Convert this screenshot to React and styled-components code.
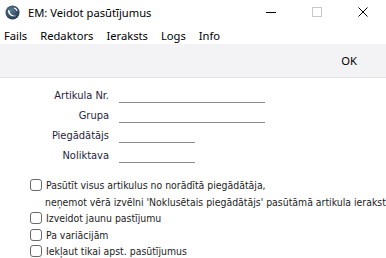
import React from 'react';
import styled, { createGlobalStyle } from 'styled-components';

const GlobalStyle = createGlobalStyle`
  html, body {
    margin: 0;
    padding: 0;
    background: #ffffff;
  }
  body {
    width: 386px;
    height: 258px;
    overflow: hidden;
  }
`;

const Window = styled.div`
  width: 386px;
  height: 258px;
  overflow: hidden;
  background: #ffffff;
`;

const TitleBar = styled.div`
  height: 24px;
  display: flex;
  align-items: center;
  padding-left: 5px;
  font-family: 'Noto Sans', 'Open Sans', sans-serif;
  font-size: 11.2px;
  color: #000;
`;

const Title = styled.span`
  margin-left: 8px;
  flex: 1;
`;

const WinButton = styled.div`
  width: 46px;
  height: 24px;
  display: flex;
  align-items: center;
  justify-content: center;
`;

const MenuBar = styled.div`
  height: 20px;
  box-sizing: border-box;
  padding: 3px 0 0 4px;
  display: flex;
  align-items: center;
  gap: 13px;
  font-family: 'Noto Sans', 'Open Sans', sans-serif;
  font-size: 11.2px;
  color: #000;
`;

const Toolbar = styled.div`
  height: 33px;
  background: #f3f3f5;
  border-bottom: 1px solid #e4e4e8;
  display: flex;
  align-items: center;
  justify-content: flex-end;
  padding-right: 29px;
  font-family: 'Noto Sans', 'Open Sans', sans-serif;
  font-size: 11.2px;
  color: #000;
`;

const Form = styled.div`
  padding-top: 10px;
  display: flex;
  flex-direction: column;
  font-family: 'DejaVu Sans Condensed', 'DejaVu Sans', sans-serif;
  font-size: 11px;
`;

const FieldRow = styled.div`
  height: 20px;
  display: flex;
  align-items: flex-start;
  gap: 10px;
`;

const Label = styled.span`
  width: 109px;
  text-align: right;
  line-height: 15px;
  color: #1e1e3c;
`;

const Field = styled.span`
  width: ${(p) => p.$w}px;
  height: 14px;
  border-bottom: 1px solid #8a8a8a;
`;

const Options = styled.div`
  margin-top: 9px;
  padding-left: 30px;
  display: flex;
  flex-direction: column;
  font-family: 'DejaVu Sans Condensed', 'DejaVu Sans', sans-serif;
  font-size: 10.4px;
  color: #1c1c1c;
  white-space: nowrap;
`;

const OptionRow = styled.div`
  height: 16.5px;
  display: flex;
  align-items: center;
  gap: 4px;
`;

const Continuation = styled.div`
  height: 16.5px;
  line-height: 16.5px;
  padding-left: 15px;
`;

const Box = styled.span`
  width: 10px;
  height: 10px;
  border: 1px solid #6a6a6a;
  border-radius: 3px;
  background: #fff;
  flex-shrink: 0;
`;

function AppIcon() {
  return (
    <svg width="15" height="15" viewBox="0 0 16 16">
      <defs>
        <radialGradient id="g" cx="0.4" cy="0.35" r="0.7">
          <stop offset="0" stopColor="#5c7c96" />
          <stop offset="1" stopColor="#1f3448" />
        </radialGradient>
      </defs>
      <circle cx="8" cy="8" r="7.5" fill="url(#g)" />
      <path d="M3.2 5.5 C3 10 7 13.5 12.5 11.5 C8.5 11.8 5.2 9.8 4.6 5.2 Z" fill="#ffffff" />
      <path d="M9.5 3.2 C11.5 3.6 12.6 5 12.8 6.4" stroke="#ffffff" strokeWidth="1.1" fill="none" />
    </svg>
  );
}

function Checkbox({ children }) {
  return (
    <OptionRow>
      <Box />
      <span>{children}</span>
    </OptionRow>
  );
}

export default function App() {
  return (
    <Window>
      <GlobalStyle />
      <TitleBar>
        <AppIcon />
        <Title>EM: Veidot pasūtījumus</Title>
        <WinButton>
          <svg width="10" height="10" viewBox="0 0 10 10">
            <line x1="0" y1="5.5" x2="10" y2="5.5" stroke="#000" strokeWidth="1" />
          </svg>
        </WinButton>
        <WinButton>
          <svg width="10" height="10" viewBox="0 0 10 10">
            <rect x="0.5" y="0.5" width="9" height="9" fill="none" stroke="#c8c8c8" strokeWidth="1" />
          </svg>
        </WinButton>
        <WinButton>
          <svg width="10" height="10" viewBox="0 0 10 10">
            <path d="M0.5 0.5 L9.5 9.5 M9.5 0.5 L0.5 9.5" stroke="#000" strokeWidth="1" />
          </svg>
        </WinButton>
      </TitleBar>
      <MenuBar>
        <span>Fails</span>
        <span>Redaktors</span>
        <span>Ieraksts</span>
        <span>Logs</span>
        <span>Info</span>
      </MenuBar>
      <Toolbar>OK</Toolbar>
      <Form>
        <FieldRow>
          <Label>Artikula Nr.</Label>
          <Field $w={146} />
        </FieldRow>
        <FieldRow>
          <Label>Grupa</Label>
          <Field $w={146} />
        </FieldRow>
        <FieldRow>
          <Label>Piegādātājs</Label>
          <Field $w={76} />
        </FieldRow>
        <FieldRow>
          <Label>Noliktava</Label>
          <Field $w={76} />
        </FieldRow>
      </Form>
      <Options>
        <Checkbox>Pasūtīt visus artikulus no norādītā piegādātāja,</Checkbox>
        <Continuation>neņemot vērā izvēlni 'Noklusētais piegādātājs' pasūtāmā artikula ierakst</Continuation>
        <Checkbox>Izveidot jaunu pastījumu</Checkbox>
        <Checkbox>Pa variācijām</Checkbox>
        <Checkbox>Iekļaut tikai apst. pasūtījumus</Checkbox>
      </Options>
    </Window>
  );
}
